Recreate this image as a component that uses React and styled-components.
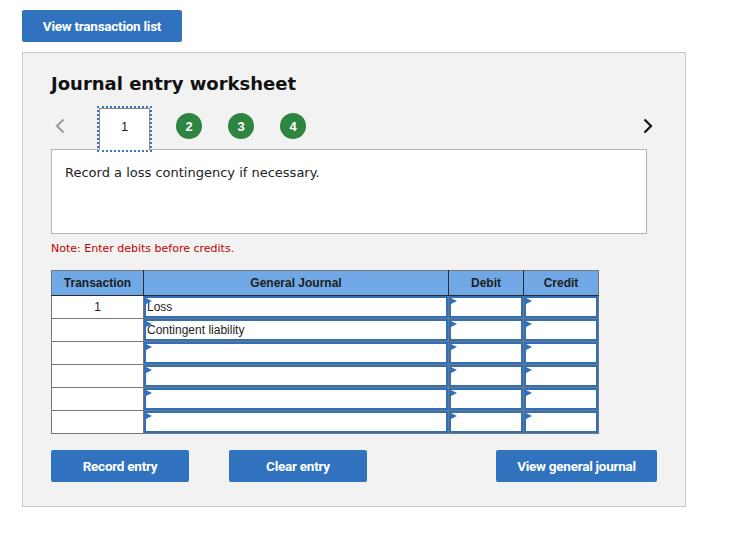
import React from "react";
import styled, { createGlobalStyle } from "styled-components";

const GlobalStyle = createGlobalStyle`
  html, body {
    margin: 0;
    padding: 0;
    background: #ffffff;
  }
  body {
    font-family: "DejaVu Sans", Verdana, sans-serif;
  }
`;

const Page = styled.div`
  padding: 10px 22px;
  width: 664px;
`;

const BlueButton = styled.button`
  width: ${(p) => p.$w}px;
  height: 32px;
  border: none;
  border-radius: 2px;
  background: #3072be;
  color: #ffffff;
  font-family: Roboto, "Liberation Sans", sans-serif;
  font-weight: 700;
  font-size: 13.5px;
  letter-spacing: -0.25px;
  padding: 0;
  cursor: pointer;
`;

const Panel = styled.div`
  margin-top: 10px;
  background: #f2f2f2;
  border: 1px solid #c8c8c8;
  padding: 20px 28px 24px 28px;
`;

const Title = styled.h2`
  margin: 0;
  font-family: "DejaVu Sans", Verdana, sans-serif;
  font-weight: 700;
  font-size: 18px;
  line-height: 22px;
  color: #111;
`;

const NavRow = styled.div`
  margin-top: 11px;
  height: 40px;
  display: flex;
  align-items: center;
  justify-content: space-between;
`;

const NavGroup = styled.div`
  display: flex;
  align-items: center;
  height: 100%;
`;

const Chevron = styled.svg`
  display: block;
  margin: ${(p) => (p.$right ? "0 4px 0 0" : "0 0 0 4px")};
`;

const ActiveTab = styled.div`
  position: relative;
  z-index: 1;
  align-self: flex-end;
  margin: 0 0 -4px 34px;
  width: 49px;
  height: 35px;
  padding-bottom: 6px;
  background: #ffffff;
  border: 1px solid #8a8a8a;
  border-bottom: none;
  outline: 2px dotted #3a74c2;
  display: flex;
  align-items: center;
  justify-content: center;
  font-family: "Liberation Sans", Arial, sans-serif;
  font-size: 13px;
  color: #222;
`;

const StepDot = styled.div`
  width: 26px;
  height: 26px;
  border-radius: 50%;
  margin-left: ${(p) => p.$ml}px;
  background: #2e8540;
  color: #ffffff;
  display: flex;
  align-items: center;
  justify-content: center;
  font-family: "Liberation Sans", Arial, sans-serif;
  font-weight: 700;
  font-size: 13px;
`;

const Instruction = styled.div`
  margin-top: 3px;
  width: 594px;
  height: 83px;
  box-sizing: content-box;
  background: #ffffff;
  border: 1px solid #b4b4b4;
  padding: 0;
`;

const InstructionText = styled.p`
  margin: 0;
  padding: 15px 0 0 13px;
  font-size: 13px;
  line-height: 16px;
  color: #222;
`;

const Note = styled.p`
  margin: 8px 0 0 0;
  font-size: 11px;
  line-height: 13px;
  color: #c00000;
`;

const Table = styled.table`
  margin-top: 15px;
  border-collapse: collapse;
  table-layout: fixed;
  font-family: "Liberation Sans", Arial, sans-serif;
  font-size: 12px;
  border: 1px solid #777;
`;

const Th = styled.th`
  width: ${(p) => p.$w}px;
  height: 24px;
  padding: 0;
  background: #70a8e6;
  color: #1e1e1e;
  font-weight: 700;
  font-size: 12px;
  border-right: 1px solid #2a2a2a;
  border-bottom: 1px solid #2a2a2a;
  &:last-child {
    border-right: 1px solid #777;
  }
`;

const Td = styled.td`
  height: 22px;
  padding: 0;
  background: #ffffff;
  border: 1px solid #777;
  text-align: ${(p) => (p.$center ? "center" : "left")};
  color: #222;
  vertical-align: middle;
`;

const InputCell = styled.div`
  position: relative;
  border: 2px solid #3070ba;
  background: #ffffff;
  padding: 2px 0 0 1px;
  box-sizing: content-box;
  height: 16px;
  line-height: 15px;
  color: #222;
  white-space: nowrap;
  overflow: hidden;

  &::before {
    content: "";
    position: absolute;
    left: 0;
    top: 0;
    border-left: 6px solid #3070ba;
    border-top: 3px solid transparent;
    border-bottom: 3px solid transparent;
  }
`;

const ButtonRow = styled.div`
  margin-top: 16px;
  display: flex;
  justify-content: space-between;
  align-items: center;
`;

const ButtonGroup = styled.div`
  display: flex;
  gap: 40px;
`;

const rows = [
  { tx: "1", account: "Loss" },
  { tx: "", account: "Contingent liability" },
  { tx: "", account: "" },
  { tx: "", account: "" },
  { tx: "", account: "" },
  { tx: "", account: "" },
];

const App = () => {
  return (
    <>
      <GlobalStyle />
      <Page>
        <BlueButton $w={160}>View transaction list</BlueButton>
        <Panel>
          <Title>Journal entry worksheet</Title>
          <NavRow>
            <NavGroup>
              <Chevron $left width="10" height="16" viewBox="0 0 10 16">
                <path d="M8.5 1.5 L2 8 L8.5 14.5" fill="none" stroke="#9a9a9a" strokeWidth="2" />
              </Chevron>
              <ActiveTab>1</ActiveTab>
              <StepDot $ml={26}>2</StepDot>
              <StepDot $ml={26}>3</StepDot>
              <StepDot $ml={26}>4</StepDot>
            </NavGroup>
            <Chevron $right width="10" height="16" viewBox="0 0 10 16">
              <path d="M1.5 1.5 L8 8 L1.5 14.5" fill="none" stroke="#111" strokeWidth="2.2" />
            </Chevron>
          </NavRow>
          <Instruction>
            <InstructionText>Record a loss contingency if necessary.</InstructionText>
          </Instruction>
          <Note>Note: Enter debits before credits.</Note>
          <Table>
            <thead>
              <tr>
                <Th $w={91}>Transaction</Th>
                <Th $w={304}>General Journal</Th>
                <Th $w={74}>Debit</Th>
                <Th $w={74}>Credit</Th>
              </tr>
            </thead>
            <tbody>
              {rows.map((r, i) => (
                <tr key={i}>
                  <Td $center>{r.tx}</Td>
                  <Td>
                    <InputCell>{r.account}</InputCell>
                  </Td>
                  <Td>
                    <InputCell />
                  </Td>
                  <Td>
                    <InputCell />
                  </Td>
                </tr>
              ))}
            </tbody>
          </Table>
          <ButtonRow>
            <ButtonGroup>
              <BlueButton $w={138}>Record entry</BlueButton>
              <BlueButton $w={138}>Clear entry</BlueButton>
            </ButtonGroup>
            <BlueButton $w={161}>View general journal</BlueButton>
          </ButtonRow>
        </Panel>
      </Page>
    </>
  );
};

export default App;
